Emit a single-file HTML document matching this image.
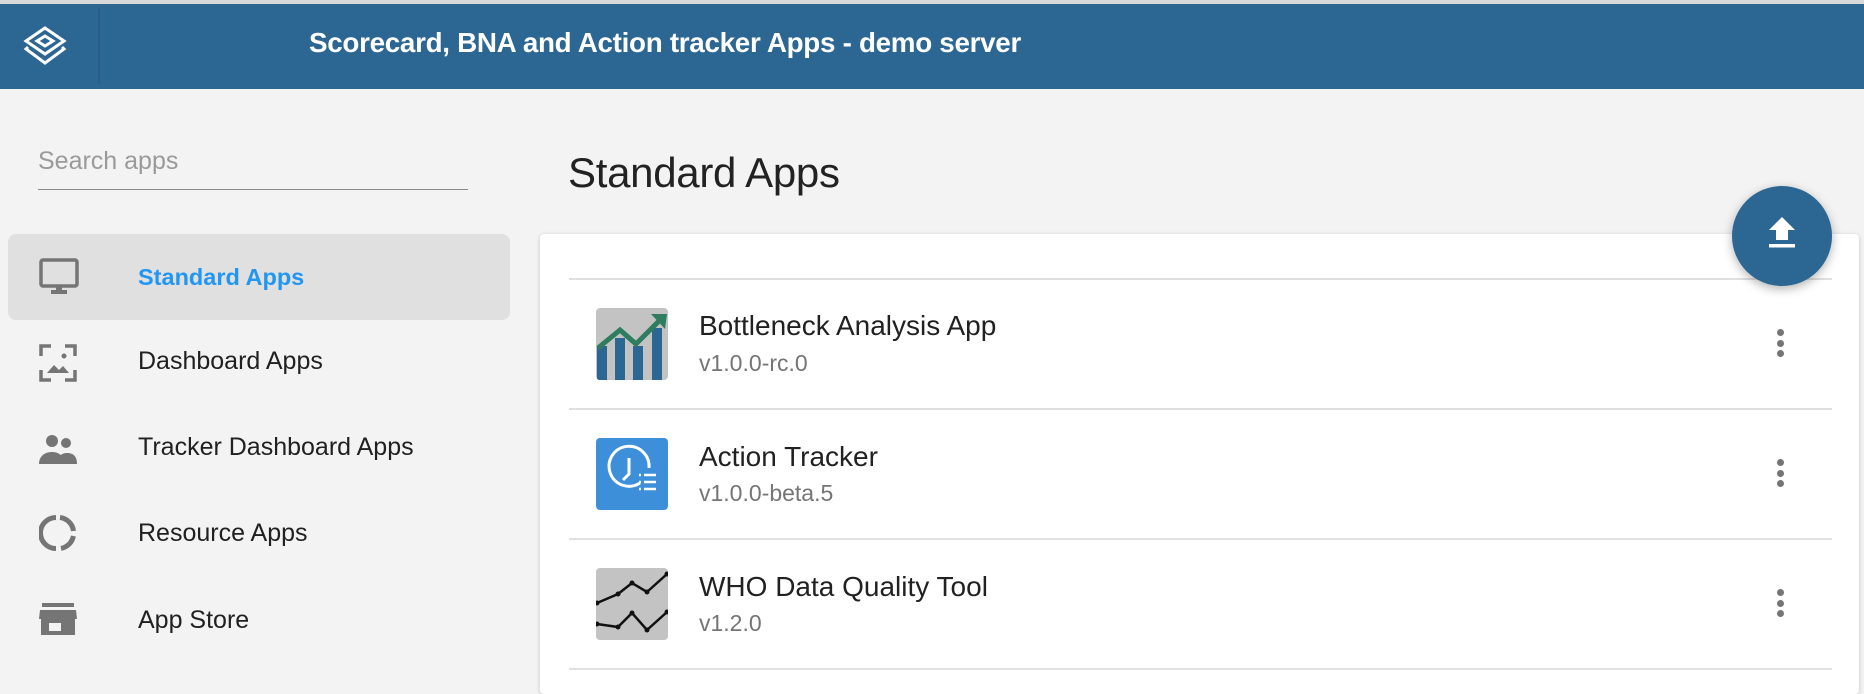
<!DOCTYPE html>
<html><head><meta charset="utf-8"><style>
*{margin:0;padding:0;box-sizing:border-box}
body{width:1864px;height:676px;overflow:hidden;background:#f3f3f3;font-family:"Liberation Sans",Arial,sans-serif;position:relative}
.top{position:absolute;left:0;top:0;width:1864px;height:4px;background:#d9d9d9}
.hdr{position:absolute;left:0;top:4px;width:1864px;height:85px;background:#2c6693}
.div{position:absolute;left:98px;top:8px;width:2px;height:76px;background:#285d87}
.title{position:absolute;left:309px;top:27px;color:#fff;font-weight:bold;font-size:27.8px;letter-spacing:-0.3px}
.search{position:absolute;left:38px;top:147px;font-size:25px;color:#9a9a9a}
.sline{position:absolute;left:38px;top:189px;width:430px;height:1px;background:#8a8a8a}
.sel{position:absolute;left:8px;top:234px;width:502px;height:86px;background:#e0e0e0;border-radius:8px}
.nav{position:absolute;left:138px;font-size:25px;color:#212121}
.ic{position:absolute;left:39px}
.h1{position:absolute;left:568px;top:149px;font-size:42px;color:#222;letter-spacing:-0.3px}
.card{position:absolute;left:540px;top:234px;width:1319px;height:460px;background:#fff;border-radius:4px;box-shadow:0 1px 4px rgba(0,0,0,.2)}
.hr{position:absolute;left:569px;width:1263px;height:2px;background:#e0e0e0}
.appi{position:absolute;left:596px;width:72px;height:72px;border-radius:4px;overflow:hidden}
.at{position:absolute;left:699px;font-size:28px;color:#212121}
.av{position:absolute;left:699px;font-size:23px;color:#757575}
.keb{position:absolute;left:1776px;width:10px}
.keb i{display:block;width:7px;height:7px;border-radius:50%;background:#757575;margin:0 0 3.5px 1px}
.fab{position:absolute;left:1732px;top:186px;width:100px;height:100px;border-radius:50%;background:#2c6693;box-shadow:0 3px 10px rgba(0,0,0,.3)}
</style></head><body>
<div class="top"></div>
<div class="hdr"></div>
<div class="div"></div>
<svg style="position:absolute;left:22px;top:25px" width="46" height="42" viewBox="0 0 46 42" fill="none" stroke="#fff" stroke-width="3"><path d="M23 3 L42 16 L23 29 L4 16 Z"/><path d="M23 11 L31 16 L23 21 L15 16 Z"/><path d="M6 22 L4 24 L23 38 L42 24 L40 22"/></svg>
<div class="title">Scorecard, BNA and Action tracker Apps - demo server</div>

<div class="search">Search apps</div>
<div class="sline"></div>
<div class="sel"></div>
<svg class="ic" style="top:258px" width="40" height="38" viewBox="0 0 40 38"><rect x="2" y="2" width="36" height="26" rx="2" fill="none" stroke="#757575" stroke-width="3.5"/><rect x="17" y="28" width="6" height="5" fill="#757575"/><rect x="12" y="32" width="16" height="4" fill="#757575"/></svg>
<div class="nav" style="top:264px;color:#2196f3;font-weight:bold;font-size:23.5px">Standard Apps</div>
<svg class="ic" style="top:344px" width="38" height="38" viewBox="0 0 38 38" fill="none" stroke="#757575" stroke-width="3.5"><path d="M2 12V2h10M26 2h10v10M36 26v10H26M12 36H2V26"/><circle cx="25" cy="12" r="2.5" fill="#757575" stroke="none"/><path d="M8 29l7-8 5 5 4-4 6 7z" fill="#757575" stroke="none"/></svg>
<div class="nav" style="top:347px">Dashboard Apps</div>
<svg class="ic" style="top:434px" width="38" height="30" viewBox="0 0 38 30" fill="#757575"><circle cx="13" cy="7" r="6"/><circle cx="27" cy="9" r="5"/><path d="M0 30c0-8 6-12 13-12s12 4 12 12z"/><path d="M18 30c0-7 4-11 10-11s10 3 10 11z"/></svg>
<div class="nav" style="top:433px">Tracker Dashboard Apps</div>
<svg class="ic" style="top:514px" width="38" height="38" viewBox="0 0 38 38" fill="none" stroke="#757575" stroke-width="5"><path d="M21 3.5A15.5 15.5 0 0 1 34.5 17"/><path d="M34.4 22A15.5 15.5 0 0 1 22 34.4"/><path d="M17 34.5A15.5 15.5 0 0 1 17 3.5"/></svg>
<div class="nav" style="top:519px">Resource Apps</div>
<svg class="ic" style="top:603px" width="38" height="32" viewBox="0 0 38 32" fill="#757575"><rect x="3" y="0" width="32" height="4"/><path d="M1 7h36l1 9H0z"/><path d="M2 16h34v16H2z M10 20v8h12v-8z" fill-rule="evenodd"/></svg>
<div class="nav" style="top:606px">App Store</div>

<div class="h1">Standard Apps</div>
<div class="card"></div>
<div class="hr" style="top:278px"></div>
<div class="hr" style="top:408px"></div>
<div class="hr" style="top:538px"></div>
<div class="hr" style="top:668px"></div>

<svg class="appi" style="top:308px" viewBox="0 0 72 72"><rect width="72" height="72" fill="#c3c3c3"/><g fill="#2c6693"><rect x="1" y="38" width="10" height="34"/><rect x="19" y="30" width="10" height="42"/><rect x="37" y="38" width="10" height="34"/><rect x="56" y="20" width="10" height="52"/></g><path d="M2 40 L24 22 L40 36 L66 10" fill="none" stroke="#2e7d5f" stroke-width="5"/><path d="M55 6 L71 6 L69 21 Z" fill="#2e7d5f"/></svg>
<div class="at" style="top:310px">Bottleneck Analysis App</div>
<div class="av" style="top:350px">v1.0.0-rc.0</div>
<div class="keb" style="top:329px"><i></i><i></i><i></i></div>

<svg class="appi" style="top:438px" viewBox="0 0 72 72"><rect width="72" height="72" fill="#3c8fd8"/><path d="M44 45 A20 20 0 1 1 53 30" fill="none" stroke="#fff" stroke-width="3"/><path d="M33 20 V36 L27 42" fill="none" stroke="#fff" stroke-width="3"/><g stroke="#fff" stroke-width="2.5"><path d="M48 37h12M48 44h12M48 51h12"/><path d="M43 37h2M43 44h2M43 51h2"/></g></svg>
<div class="at" style="top:441px">Action Tracker</div>
<div class="av" style="top:480px">v1.0.0-beta.5</div>
<div class="keb" style="top:459px"><i></i><i></i><i></i></div>

<svg class="appi" style="top:568px" viewBox="0 0 72 72"><rect width="72" height="72" fill="#c3c3c3"/><g fill="none" stroke="#111" stroke-width="2.5"><path d="M1 35 L22 26 L36 15 L51 24 L71 6"/><path d="M1 56 L22 59 L36 45 L51 62 L71 44"/></g><g fill="#111"><circle cx="1" cy="35" r="2.5"/><circle cx="22" cy="26" r="2.5"/><circle cx="36" cy="15" r="2.5"/><circle cx="51" cy="24" r="2.5"/><circle cx="71" cy="6" r="2.5"/><circle cx="1" cy="56" r="2.5"/><circle cx="22" cy="59" r="2.5"/><circle cx="36" cy="45" r="2.5"/><circle cx="51" cy="62" r="2.5"/><circle cx="71" cy="44" r="2.5"/></g></svg>
<div class="at" style="top:571px">WHO Data Quality Tool</div>
<div class="av" style="top:610px">v1.2.0</div>
<div class="keb" style="top:589px"><i></i><i></i><i></i></div>

<div class="fab"><svg style="position:absolute;left:36px;top:31px" width="28" height="32" viewBox="0 0 28 32" fill="#fff"><path d="M14 0 L27 13 H20 V23 H8 V13 H1 Z"/><rect x="1" y="27" width="26" height="3.5"/></svg></div>
</body></html>
